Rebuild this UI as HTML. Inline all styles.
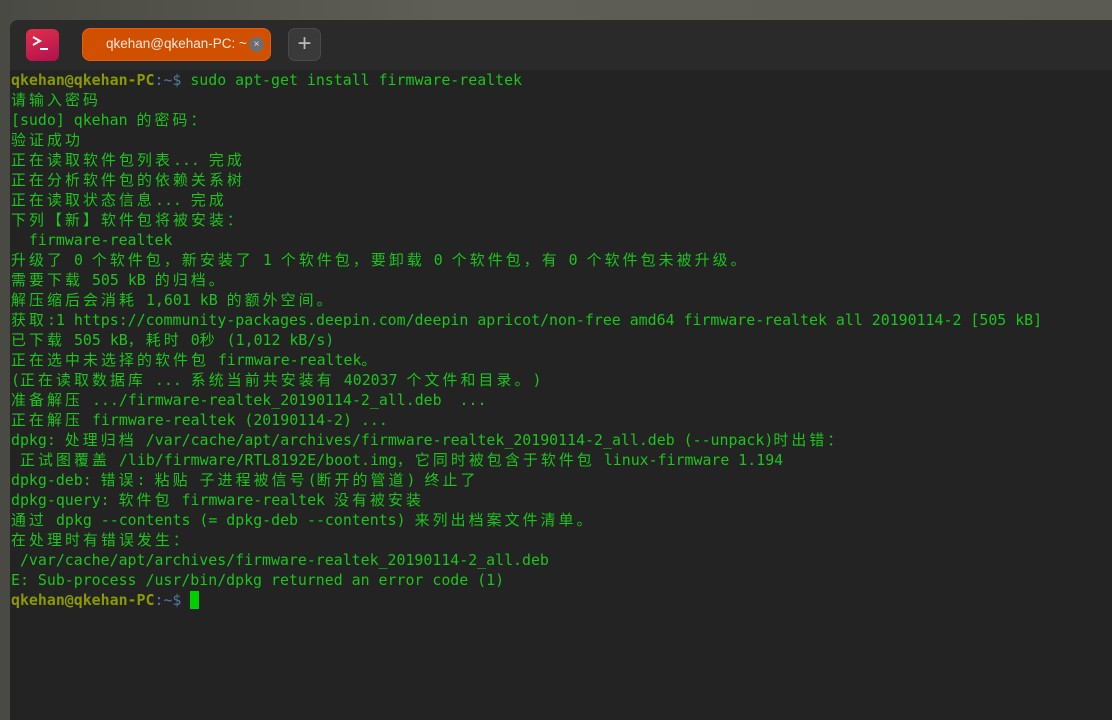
<!DOCTYPE html>
<html><head><meta charset="utf-8"><style>
body{margin:0;width:1112px;height:702px;overflow:hidden;background:linear-gradient(90deg,#4a4a44,#5e5e56 40%,#5c5b53);position:relative;}
.win{position:absolute;left:10px;top:20px;width:1110px;height:700px;background:#232323;border-top-left-radius:8px;overflow:hidden;}
.bar{height:50px;background:#2a2a2a;position:relative;}
.icon{position:absolute;left:16px;top:9px;width:33px;height:32px;border-radius:6px;background:linear-gradient(160deg,#e2304c,#b0104e);}
.tab{position:absolute;left:72px;top:8px;width:189px;height:33px;border-radius:8px;background:#d05000;box-sizing:border-box;border:1px solid #e06010;}
.tab span{position:absolute;left:23px;top:7px;font:13.5px "Liberation Sans",sans-serif;color:#f4e8e0;}
.x{position:absolute;left:166px;top:8px;width:15px;height:15px;border-radius:50%;background:#6e6e6e;color:#ddd;font:10px "Liberation Sans",sans-serif;text-align:center;line-height:15px;}
.plus{position:absolute;left:278px;top:8px;width:33px;height:33px;border-radius:7px;background:#3a3a3a;box-sizing:border-box;border:1px solid #4a4a4a;color:#bbb;font:24px "Liberation Sans",sans-serif;text-align:center;line-height:30px;}
pre{margin:0;padding:0 0 0 1px;font:14.9px/20px "DejaVu Sans Mono","Noto Sans CJK SC",monospace;color:#1cc41c;white-space:pre;}
.c{display:inline-block;width:18px;text-align:left;}
.p{color:#8c9a00;font-weight:bold;}
.t{color:#5078a0;}
.cur{display:inline-block;width:9px;height:18px;background:#00d000;vertical-align:-4px;}
</style></head><body>
<div class="win">
<div class="bar"><div class="icon"><svg width="33" height="32"><path d="M7 8 L14 12 L7 16" stroke="#fff" stroke-width="2" fill="none"/><path d="M14 20 H22" stroke="#fff" stroke-width="2"/></svg></div>
<div class="tab"><span>qkehan@qkehan-PC: ~</span><div class="x">×</div></div>
<div class="plus">+</div></div>
<pre id="t"><span class="p">qkehan@qkehan-PC</span><span class="t">:~$</span> sudo apt-get install firmware-realtek
请输入密码
[sudo] qkehan 的密码：
验证成功
正在读取软件包列表... 完成
正在分析软件包的依赖关系树
正在读取状态信息... 完成
下列【新】软件包将被安装：
  firmware-realtek
升级了 0 个软件包，新安装了 1 个软件包，要卸载 0 个软件包，有 0 个软件包未被升级。
需要下载 505 kB 的归档。
解压缩后会消耗 1,601 kB 的额外空间。
获取:1 https://community-packages.deepin.com/deepin apricot/non-free amd64 firmware-realtek all 20190114-2 [505 kB]
已下载 505 kB，耗时 0秒 (1,012 kB/s)
正在选中未选择的软件包 firmware-realtek。
(正在读取数据库 ... 系统当前共安装有 402037 个文件和目录。)
准备解压 .../firmware-realtek_20190114-2_all.deb  ...
正在解压 firmware-realtek (20190114-2) ...
dpkg: 处理归档 /var/cache/apt/archives/firmware-realtek_20190114-2_all.deb (--unpack)时出错：
 正试图覆盖 /lib/firmware/RTL8192E/boot.img，它同时被包含于软件包 linux-firmware 1.194
dpkg-deb: 错误: 粘贴 子进程被信号(断开的管道) 终止了
dpkg-query: 软件包 firmware-realtek 没有被安装
通过 dpkg --contents (= dpkg-deb --contents) 来列出档案文件清单。
在处理时有错误发生：
 /var/cache/apt/archives/firmware-realtek_20190114-2_all.deb
E: Sub-process /usr/bin/dpkg returned an error code (1)
<span class="p">qkehan@qkehan-PC</span><span class="t">:~$</span> <span class="cur"></span></pre>
</div>
<script>
(function(){var pre=document.getElementById('t');var w=document.createTreeWalker(pre,NodeFilter.SHOW_TEXT);var ns=[];while(w.nextNode())ns.push(w.currentNode);
var re=/[\u3000-\u303f\u4e00-\u9fff\uff00-\uffef]/;
ns.forEach(function(n){var s=n.nodeValue;if(!re.test(s))return;var f=document.createDocumentFragment();var buf='';
for(var i=0;i<s.length;i++){var ch=s[i];if(re.test(ch)){if(buf){f.appendChild(document.createTextNode(buf));buf='';}var sp=document.createElement('span');sp.className='c';sp.textContent=ch;f.appendChild(sp);}else buf+=ch;}
if(buf)f.appendChild(document.createTextNode(buf));n.parentNode.replaceChild(f,n);});})();
</script>
</body></html>
